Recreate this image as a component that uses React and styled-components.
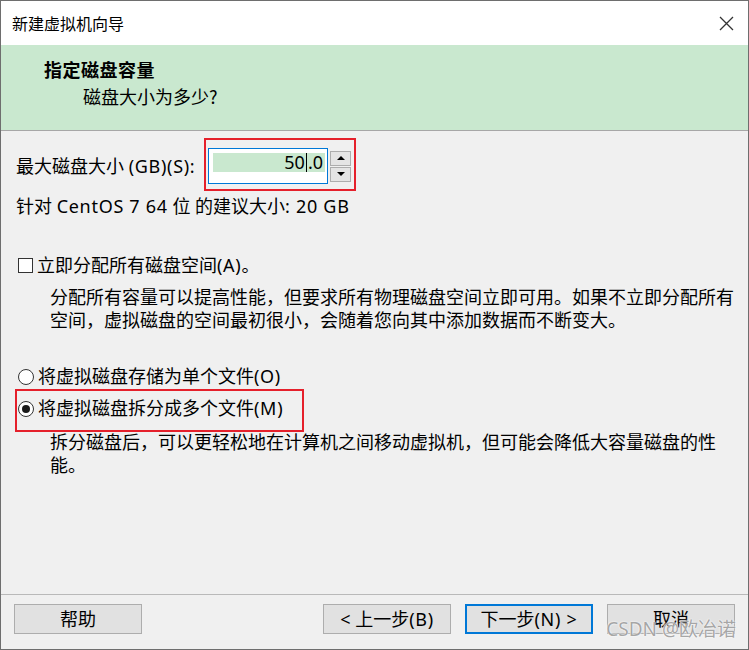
import React from "react";
import styled, { createGlobalStyle } from "styled-components";

const Global = createGlobalStyle`
  html, body { margin: 0; padding: 0; background: #f0f0f0; }
  * { box-sizing: border-box; }
  body {
    font-family: "Noto Sans", "Noto Sans CJK SC", sans-serif;
    color: #000;
  }
`;

const Window = styled.div`
  position: relative;
  width: 749px;
  height: 650px;
  border: 1px solid #6e6e6e;
  display: flex;
  flex-direction: column;
  background: #f0f0f0;
  overflow: hidden;
`;

const TitleBar = styled.div`
  height: 44px;
  flex: none;
  background: #fff;
  display: flex;
  align-items: center;
  justify-content: space-between;
  padding: 0 14px 0 11px;
  font-size: 16px;
  font-family: "Noto Sans CJK SC", sans-serif;
`;

const CloseIcon = styled.svg`
  width: 15px;
  height: 15px;
  display: block;
`;

const Header = styled.div`
  flex: none;
  height: 86px;
  background: #c9e8cf;
  border-bottom: 1px solid #a7a7a7;
  padding: 12px 0 0 43px;
  font-family: "Noto Sans CJK SC", sans-serif;
`;

const HeaderTitle = styled.div`
  font-size: 18px;
  font-weight: 700;
  line-height: 24px;
  letter-spacing: 0.5px;
`;

const HeaderSub = styled.div`
  font-size: 18px;
  line-height: 23px;
  margin: 4px 0 0 39px;
`;

const Body = styled.div`
  flex: 1;
  padding: 17px 15px 0 15px;
  font-size: 18px;
  line-height: 23px;
  display: flex;
  flex-direction: column;
  align-items: flex-start;
`;

const Latin = styled.span`
  letter-spacing: 0.7px;
`;

const SizeRow = styled.div`
  display: flex;
  align-items: center;
  gap: 7px;
`;

const SizeLabel = styled.span`
  width: 185px;
  white-space: nowrap;
`;

const Annotated = styled.div`
  position: relative;
  display: flex;
  align-items: center;
`;

const RedBox = styled.div`
  position: absolute;
  top: ${(p) => p.$top}px;
  left: ${(p) => p.$left}px;
  width: ${(p) => p.$w}px;
  height: ${(p) => p.$h}px;
  border: 2px solid #e5202b;
  pointer-events: none;
`;

const Field = styled.div`
  width: 120px;
  height: 36px;
  border: 1px solid #0078d7;
  background: #fff;
  padding: 4px 2px 0 4px;
`;

const Selected = styled.div`
  height: 19px;
  background: #c9e8cf;
  display: flex;
  align-items: center;
  justify-content: flex-end;
  padding-right: 2px;
  font-size: 18px;
  line-height: 19px;
`;

const Caret = styled.span`
  display: inline-block;
  width: 1px;
  height: 19px;
  background: #000;
  margin: 0 1px;
`;

const Spinner = styled.div`
  display: flex;
  flex-direction: column;
  gap: 1px;
  margin-left: 2px;
`;

const SpinButton = styled.div`
  width: 21px;
  height: 15px;
  background: #e4e4e4;
  border: 1px solid #adadad;
  display: flex;
  align-items: center;
  justify-content: center;
`;

const Arrow = styled.div`
  width: 0;
  height: 0;
  border-left: 4px solid transparent;
  border-right: 4px solid transparent;
  ${(p) =>
    p.$up
      ? "border-bottom: 4px solid #000;"
      : "border-top: 4px solid #000;"}
`;

const Hint = styled.div`
  margin-top: 11px;
  white-space: pre;
`;

const Choice = styled.label`
  display: flex;
  align-items: center;
  gap: 4px;
  margin-top: ${(p) => p.$mt || 0}px;
  margin-left: 2px;
  white-space: nowrap;
`;

const CheckBox = styled.span`
  width: 15px;
  height: 15px;
  border: 1px solid #333;
  background: #fff;
  flex: none;
`;

const Radio = styled.span`
  width: 16px;
  height: 16px;
  border-radius: 50%;
  border: 1px solid #333;
  background: #fff;
  flex: none;
  display: flex;
  align-items: center;
  justify-content: center;
  &::after {
    content: "";
    width: 8px;
    height: 8px;
    border-radius: 50%;
    background: ${(p) => (p.$checked ? "#1a1a1a" : "transparent")};
  }
`;

const Para = styled.p`
  margin: ${(p) => p.$mt}px 0 0 34px;
  width: 690px;
  font-family: "Noto Sans CJK SC", sans-serif;
  font-size: 18px;
  line-height: 23px;
`;

const Footer = styled.div`
  flex: none;
  height: 55px;
  border-top: 1px solid #b9b9b9;
  padding: 9px 13px 0 13px;
  display: flex;
  justify-content: space-between;
  align-items: flex-start;
`;

const ButtonGroup = styled.div`
  display: flex;
  gap: 14px;
`;

const Button = styled.button`
  width: 128px;
  height: 30px;
  background: #e1e1e1;
  border: ${(p) => (p.$default ? "2px solid #0078d7" : "1px solid #adadad")};
  font-family: "Noto Sans", "Noto Sans CJK SC", sans-serif;
  font-size: 18px;
  line-height: 26px;
  color: #000;
  padding: 0;
  display: flex;
  align-items: center;
  justify-content: center;
`;

const Watermark = styled.div`
  position: absolute;
  right: 12px;
  bottom: 7px;
  font-family: "Noto Sans", "Noto Sans CJK SC", sans-serif;
  font-size: 19px;
  color: rgba(150, 150, 150, 0.85);
  text-shadow: 0 0 2px #fff, 0 0 1px #fff;
  pointer-events: none;
  white-space: nowrap;
`;

export default function App() {
  return (
    <>
      <Global />
      <Window>
        <TitleBar>
          <span>新建虚拟机向导</span>
          <CloseIcon viewBox="0 0 15 15">
            <path d="M1 1 L14 14 M14 1 L1 14" stroke="#333" strokeWidth="1.3" fill="none" />
          </CloseIcon>
        </TitleBar>
        <Header>
          <HeaderTitle>指定磁盘容量</HeaderTitle>
          <HeaderSub>磁盘大小为多少?</HeaderSub>
        </Header>
        <Body>
          <SizeRow>
            <SizeLabel>
              最大磁盘大小 <Latin>(GB)(S):</Latin>
            </SizeLabel>
            <Annotated>
              <Field>
                <Selected>
                  50<Caret />.0
                </Selected>
              </Field>
              <Spinner>
                <SpinButton>
                  <Arrow $up />
                </SpinButton>
                <SpinButton>
                  <Arrow />
                </SpinButton>
              </Spinner>
              <RedBox $top={-10} $left={-4} $w={152} $h={53} />
            </Annotated>
          </SizeRow>
          <Hint>
            针对 <Latin>CentOS 7 64</Latin> 位 的建议大小<Latin>: 20 GB</Latin>
          </Hint>
          <Choice $mt={36}>
            <CheckBox />
            <span>
              立即分配所有磁盘空间<Latin>(A)</Latin>。
            </span>
          </Choice>
          <Para $mt={8}>
            分配所有容量可以提高性能，但要求所有物理磁盘空间立即可用。如果不立即分配所有空间，虚拟磁盘的空间最初很小，会随着您向其中添加数据而不断变大。
          </Para>
          <Choice $mt={34}>
            <Radio />
            <span>
              将虚拟磁盘存储为单个文件<Latin>(O)</Latin>
            </span>
          </Choice>
          <Annotated>
            <Choice $mt={9}>
              <Radio $checked />
              <span>
                将虚拟磁盘拆分成多个文件<Latin>(M)</Latin>
              </span>
            </Choice>
            <RedBox $top={1} $left={-1} $w={289} $h={43} />
          </Annotated>
          <Para $mt={10}>
            拆分磁盘后，可以更轻松地在计算机之间移动虚拟机，但可能会降低大容量磁盘的性能。
          </Para>
        </Body>
        <Footer>
          <Button>帮助</Button>
          <ButtonGroup>
            <Button>
              &lt; 上一步<Latin>(B)</Latin>
            </Button>
            <Button $default>
              下一步<Latin>(N) &gt;</Latin>
            </Button>
            <Button>取消</Button>
          </ButtonGroup>
        </Footer>
        <Watermark>CSDN @欧冶诺</Watermark>
      </Window>
    </>
  );
}
